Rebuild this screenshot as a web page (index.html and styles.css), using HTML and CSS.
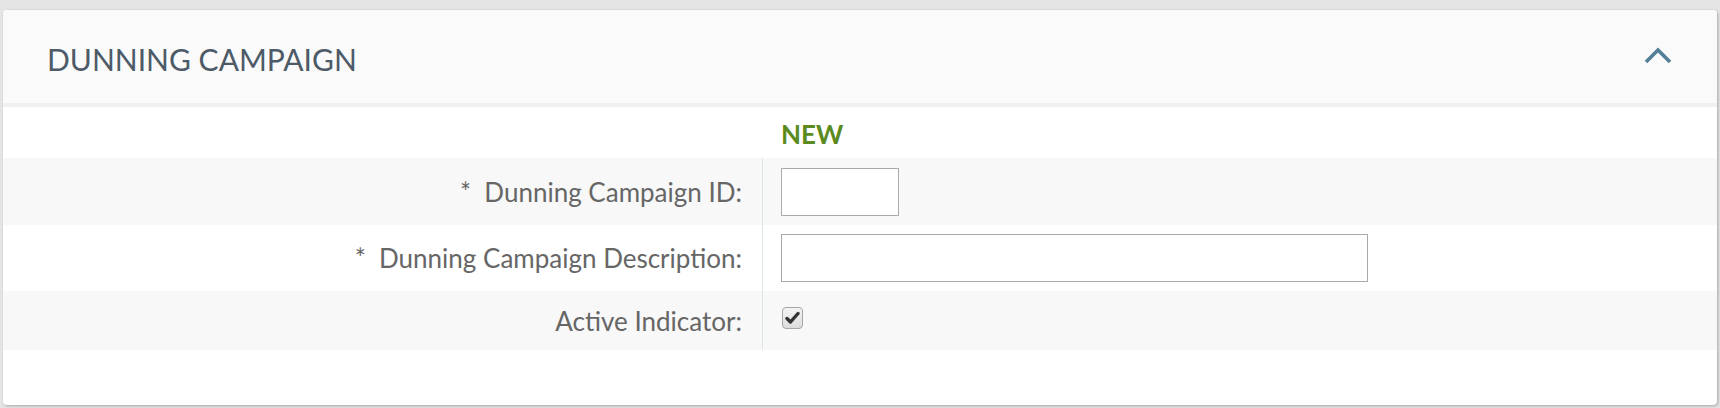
FILE: index.html
```html
<!DOCTYPE html>
<html lang="en">
<head>
<meta charset="utf-8">
<title>Dunning Campaign</title>
<link rel="stylesheet" href="styles.css">
</head>
<body>
<section class="panel">
  <header class="panel-head">
    <h1 class="panel-title">DUNNING CAMPAIGN</h1>
    <button class="collapse" type="button" aria-label="Collapse">
      <svg width="28" height="18" viewBox="0 0 28 18"><polyline points="2,16 14,4 26,16" fill="none" stroke="#557f96" stroke-width="3.6"/></svg>
    </button>
  </header>
  <div class="form">
    <div class="row row-status">
      <div class="label-cell"></div>
      <div class="value-cell status">NEW</div>
    </div>
    <div class="row alt">
      <div class="label-cell with-divider">*&nbsp; Dunning Campaign ID:</div>
      <div class="value-cell"><input class="field field-short" type="text"></div>
    </div>
    <div class="row">
      <div class="label-cell with-divider">*&nbsp; Dunning Campaign Description:</div>
      <div class="value-cell"><input class="field field-long" type="text"></div>
    </div>
    <div class="row alt row-check">
      <div class="label-cell with-divider">Active Indicator:</div>
      <div class="value-cell">
        <span class="checkbox" role="checkbox" aria-checked="true">
          <svg width="15" height="14" viewBox="0 0 15 14"><path d="M2 7.5 L5.5 11 L13 2.5" fill="none" stroke="#333" stroke-width="3.4" stroke-linecap="round" stroke-linejoin="round"/></svg>
        </span>
      </div>
    </div>
  </div>
</section>
</body>
</html>
```

FILE: styles.css
```css
html, body {
  margin: 0;
  padding: 0;
  background: #e5e5e5;
  font-family: Lato, "Open Sans", sans-serif;
}
body {
  padding: 10px 3px 3px 3px;
}
.panel {
  background: #ffffff;
  border-radius: 4px;
  box-shadow: 1px 1px 3px rgba(0, 0, 0, 0.28);
  height: 395px;
  overflow: hidden;
}
.panel-head {
  height: 93px;
  background: #fafafa;
  border-bottom: 4px solid #f0f0f0;
  display: flex;
  align-items: center;
  justify-content: space-between;
  padding: 0 45px 0 44px;
}
.panel-title {
  margin: 0;
  font-weight: 400;
  font-size: 30px;
  color: #4d5a68;
  padding-top: 4px;
}
.collapse {
  background: none;
  border: 0;
  padding: 0;
  display: flex;
  margin-top: -3px;
}
.form {
  display: flex;
  flex-direction: column;
}
.row {
  display: grid;
  grid-template-columns: 760px 1fr;
  height: 66px;
}
.row.alt { background: #f8f8f8; }
.row-status { height: 51px; background: #fff; }
.row-status + .row { height: 67px; }
.row-check { height: 59px; }
.label-cell {
  display: flex;
  align-items: center;
  justify-content: flex-end;
  padding-right: 20px;
  font-size: 26px;
  color: #666666;
}
.with-divider {
  border-right: 1px solid #dbe7e7;
}
.value-cell {
  display: flex;
  align-items: center;
  padding-left: 18px;
}
.status {
  font-weight: 700;
  font-size: 26px;
  color: #5b8a1e;
  padding-top: 2px;
}
.field {
  box-sizing: border-box;
  height: 48px;
  border: 1px solid #aaaaaa;
  background: #fff;
  border-radius: 0;
  margin: 0;
  padding: 0 8px;
  font-family: inherit;
  font-size: 22px;
}
.field-short { width: 118px; }
.field-long { width: 587px; }
.checkbox {
  box-sizing: border-box;
  width: 21px;
  height: 22px;
  border: 1px solid #a6a6a6;
  border-radius: 4px;
  background: linear-gradient(#f4f4f4, #dcdcdc);
  display: flex;
  align-items: center;
  justify-content: center;
  margin-top: -6px;
  margin-left: 1px;
}
```
